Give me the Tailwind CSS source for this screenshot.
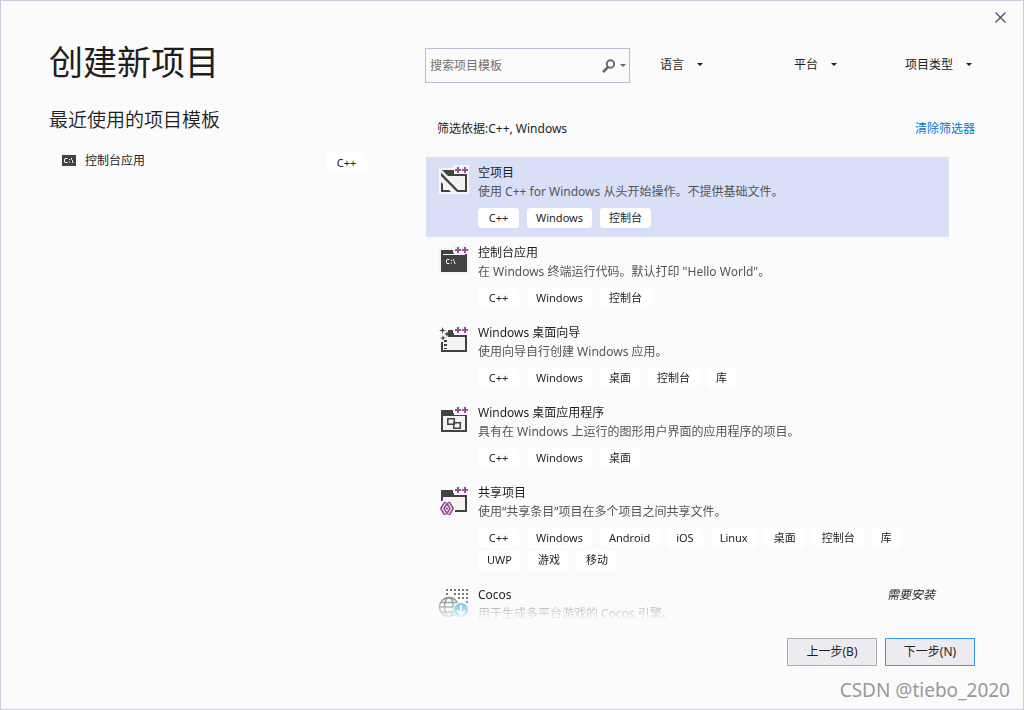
<!DOCTYPE html>
<html lang="zh-CN">
<head>
<meta charset="utf-8">
<title>创建新项目</title>
<script src="https://cdn.jsdelivr.net/npm/@tailwindcss/browser@4"></script>
</head>
<body class="relative flex h-screen flex-col border border-[#ccccdc] bg-[#fbfbfb] font-['Noto_Sans','Noto_Sans_CJK_SC',sans-serif] text-xs text-[#1e1e1e]">
<svg class="hidden" aria-hidden="true">
  <symbol id="plus" viewBox="0 0 32 32"><path fill="#9b4f96" d="M19 4h2v2h2v2h-2v2h-2V8h-2V6h2zM26 4h2v2h2v2h-2v2h-2V8h-2V6h2z"/></symbol>
  <symbol id="arrow" viewBox="0 0 6 3"><path fill="currentColor" d="M0 0h6L3 3z"/></symbol>
</svg>
<header class="flex h-8 shrink-0 items-center justify-end pr-[13px]">
  <button type="button" aria-label="关闭" class="flex size-5 items-center justify-center">
    <svg class="size-[11px]" viewBox="0 0 11 11" stroke="#3c4458" stroke-width="1.1"><path d="M.5.5l10 10M10.5.5l-10 10"/></svg>
  </button>
</header>
<main class="grid min-h-0 flex-1 grid-cols-[318px_1fr] gap-[58px] px-12">
  <section class="pt-[5px]">
    <h1 class="text-[34px] leading-[48px] font-normal">创建新项目</h1>
    <h2 class="mt-5 text-[19px] leading-7 font-[350]">最近使用的项目模板</h2>
    <a href="#" class="mt-[17px] flex items-start pl-[13px] leading-5">
      <svg class="mt-1 h-[11px] w-3.5" viewBox="0 0 14 11"><path fill="#424242" d="M0 0h14v11H0z"/><path fill="none" stroke="#fff" d="M5.5 3.5H3L2.5 4v3l.5.5h2.500M7 4.500h1M7 7h1M9.500 3v1.500l1 1V7l1 1"/></svg>
      <span class="ml-[9px]">控制台应用</span>
      <span class="mt-0.5 ml-auto min-w-[41px] rounded bg-white px-[9px] text-center text-[11px]">C++</span>
    </a>
  </section>
  <section class="flex min-h-0 min-w-0 flex-col pt-[15px]">
    <div class="flex items-center">
      <div class="flex h-[35px] w-[205px] items-center border border-[#b9bfd0] pr-[3px] pl-1">
        <input type="search" aria-label="搜索项目模板" placeholder="搜索项目模板" class="min-w-0 flex-1 bg-transparent outline-none placeholder:text-[#717171]">
        <button type="button" aria-label="搜索" class="flex items-center gap-1 text-[#6a6a6a]">
          <svg class="size-[14px]" viewBox="0 0 14 14" fill="none" stroke="currentColor"><circle cx="8.500" cy="5" r="3.700" stroke-width="2"/><path d="M6 8l-5 5" stroke-width="2.600"/></svg>
          <svg class="h-[3px] w-1.5"><use href="#arrow"/></svg>
        </button>
      </div>
      <div class="ml-[30px] grid flex-1 grid-cols-[134px_111px_auto] pb-0.5">
        <label class="flex items-center gap-3"><select aria-label="语言" class="appearance-none bg-transparent"><option>语言</option></select><svg class="h-[3px] w-1.5"><use href="#arrow"/></svg></label>
        <label class="flex items-center gap-3"><select aria-label="平台" class="appearance-none bg-transparent"><option>平台</option></select><svg class="h-[3px] w-1.5"><use href="#arrow"/></svg></label>
        <label class="flex items-center gap-3"><select aria-label="项目类型" class="appearance-none bg-transparent"><option>项目类型</option></select><svg class="h-[3px] w-1.5"><use href="#arrow"/></svg></label>
      </div>
    </div>
    <div class="mt-9 flex justify-between pl-3 leading-5">
      <p>筛选依据:C++, Windows</p>
      <a href="#" class="text-[#0078d4]">清除筛选器</a>
    </div>
    <ul class="mt-[18px] mr-[26px] ml-px min-h-0 flex-1 overflow-y-auto leading-[19px] [mask-image:linear-gradient(to_bottom,black_calc(100%-25px),transparent_calc(100%-1px))] [scrollbar-width:none]">
      <li class="flex gap-2 bg-[#dadff8] pt-1.5 pr-3 pb-[9px] pl-3">
        <svg class="size-8 shrink-0" viewBox="0 0 32 32"><path fill="#f6f6f6" d="M1 5h14V2h16v29H1z"/><path fill="#424242" d="M4 7h12v4h13v18h-8l-2-2h8V13H10z"/><path fill="#f0f0f0" d="M10 13h17v14h-4z"/><path fill="#424242" d="M3 9.500V13l16 16h3zM3 19l2 2v6h6l2 2H3z"/><use href="#plus"/></svg>
        <div>
          <h3>空项目</h3>
          <p class="text-[#555]">使用 C++ for Windows 从头开始操作。不提供基础文件。</p>
          <div class="mt-[7px] flex flex-wrap gap-x-2 gap-y-0.5 text-center text-[11px] leading-5 *:rounded *:bg-white *:px-[9px]"><span class="min-w-[41px]">C++</span><span>Windows</span><span>控制台</span></div>
        </div>
      </li>
      <li class="flex gap-2 pt-1.5 pr-3 pb-[9px] pl-3">
        <svg class="size-8 shrink-0" viewBox="0 0 32 32"><path fill="#f4f4f4" d="M1 5h14V2h16v29H1z"/><path fill="#424242" d="M3 7h12v3h1v1h13v18H3z"/><path fill="#f6f6f6" d="M5 11h22v1H5z"/><path fill="none" stroke="#fff" d="M11.500 16.500H9l-.5.500v3l.5.500h2.500M13 17.500h1M13 20h1M15.500 16v1.500l1 1V20l1 1"/><use href="#plus"/></svg>
        <div>
          <h3>控制台应用</h3>
          <p class="text-[#555]">在 Windows 终端运行代码。默认打印 "Hello World"。</p>
          <div class="mt-[7px] flex flex-wrap gap-x-2 gap-y-0.5 text-center text-[11px] leading-5 *:rounded *:bg-white *:px-[9px]"><span class="min-w-[41px]">C++</span><span>Windows</span><span>控制台</span></div>
        </div>
      </li>
      <li class="flex gap-2 pt-1.5 pr-3 pb-[9px] pl-3">
        <svg class="size-8 shrink-0" viewBox="0 0 32 32"><path fill="#424242" d="M10 7h5v3h1v2h13v17H3V19h2v8h22V14H10z"/><path fill="#f3f3f3" d="M9 14h18v13H5v-8h4z"/><path fill="#424242" d="M6 17h3v2H6zM6 21h3v2H6zM6 25h3v1H6zM4.500 4l.8 2.700L8 7.500l-2.700.8L4.500 11l-.8-2.700L1 7.500l2.700-.8zM9 8l.8 2.200 2.200.8-2.200.8L9 14l-.8-2.200L6 11l2.200-.8zM5 12l.7 2.300L8 15l-2.300.7L5 18l-.7-2.300L2 15l2.300-.7z"/><use href="#plus"/></svg>
        <div>
          <h3>Windows 桌面向导</h3>
          <p class="text-[#555]">使用向导自行创建 Windows 应用。</p>
          <div class="mt-[7px] flex flex-wrap gap-x-2 gap-y-0.5 text-center text-[11px] leading-5 *:rounded *:bg-white *:px-[9px]"><span class="min-w-[41px]">C++</span><span>Windows</span><span>桌面</span><span>控制台</span><span>库</span></div>
        </div>
      </li>
      <li class="flex gap-2 pt-1.5 pr-3 pb-[9px] pl-3">
        <svg class="size-8 shrink-0" viewBox="0 0 32 32"><path fill="#424242" d="M3 7h12v3h1v2h13v17H3z"/><path fill="#f3f3f3" d="M5 13h22v14H5z"/><g fill="#f3f3f3" stroke="#424242" stroke-width="1.500"><path d="M9.800 15.800h6.500v5.500H9.800zM15.800 19.800h6.500v5.500h-6.500z"/></g><use href="#plus"/></svg>
        <div>
          <h3>Windows 桌面应用程序</h3>
          <p class="text-[#555]">具有在 Windows 上运行的图形用户界面的应用程序的项目。</p>
          <div class="mt-[7px] flex flex-wrap gap-x-2 gap-y-0.5 text-center text-[11px] leading-5 *:rounded *:bg-white *:px-[9px]"><span class="min-w-[41px]">C++</span><span>Windows</span><span>桌面</span></div>
        </div>
      </li>
      <li class="flex gap-2 pt-1.5 pr-3 pb-[9px] pl-3">
        <svg class="size-8 shrink-0" viewBox="0 0 32 32"><path fill="#424242" d="M3 7h12v3h1v2h13v17H17v-2h10V14H5v4H3z"/><path fill="#f3f3f3" d="M5 14h22v13H5z"/><path fill="#fbfbfb" d="M5 17h9l4 8-3 7H5l-4-7z"/><g fill="none" stroke="#9b4f96" stroke-width="1.700"><path d="M8 19.500H6.300L2.800 25.500l3.500 6H8M10 19.500h1.700l3.500 6-3.500 6H10M9 20.500l-3 5 3 5 3-5z"/></g><path fill="#9b4f96" d="M8 24.500h2v2H8z"/><use href="#plus"/></svg>
        <div>
          <h3>共享项目</h3>
          <p class="text-[#555]">使用“共享条目”项目在多个项目之间共享文件。</p>
          <div class="mt-[7px] flex flex-wrap gap-x-2 gap-y-0.5 text-center text-[11px] leading-5 *:rounded *:bg-white *:px-[9px]"><span class="min-w-[41px]">C++</span><span>Windows</span><span>Android</span><span>iOS</span><span>Linux</span><span>桌面</span><span>控制台</span><span>库</span><span>UWP</span><span>游戏</span><span>移动</span></div>
        </div>
      </li>
      <li class="flex gap-2 pt-1.5 pr-3.5 pl-3">
        <svg class="size-8 shrink-0" viewBox="0 0 32 32" fill="none"><path stroke="#777" stroke-width="2" stroke-dasharray="2 2" d="M8 5h22M8 9h2M16 9h14M20 13h10M28 17h2"/><circle cx="11" cy="22" r="11" fill="#fbfbfb"/><g stroke="#8a8a8a" stroke-width="1.600"><circle cx="11" cy="22" r="9.500"/><ellipse cx="11" cy="22" rx="4.500" ry="9.500"/><path d="M2.500 17.500h17M1.500 22h19M2.500 27h17"/></g><circle cx="23" cy="25" r="8" fill="#fbfbfb"/><circle cx="23" cy="25" r="7" fill="#4fb0e8"/><path stroke="#fff" stroke-width="2" d="M23 20v9M19 25.500l4 4 4-4"/></svg>
        <div class="flex-1">
          <h3>Cocos</h3>
          <p class="text-[#888]">用于生成多平台游戏的 Cocos 引擎。</p>
        </div>
        <em>需要安装</em>
      </li>
    </ul>
    <div class="mt-4 flex justify-end gap-2 pb-[43px]">
      <button type="button" class="h-7 w-[90px] border border-[#acacac] bg-[#ececf0]">上一步(B)</button>
      <button type="button" class="h-7 w-[90px] border border-[#3399ff] bg-[#ececf0]">下一步(N)</button>
    </div>
  </section>
</main>
<p class="absolute right-[13px] bottom-1 text-[19px] leading-[30px] text-[#999]">CSDN @tiebo_2020</p>
</body>
</html>
